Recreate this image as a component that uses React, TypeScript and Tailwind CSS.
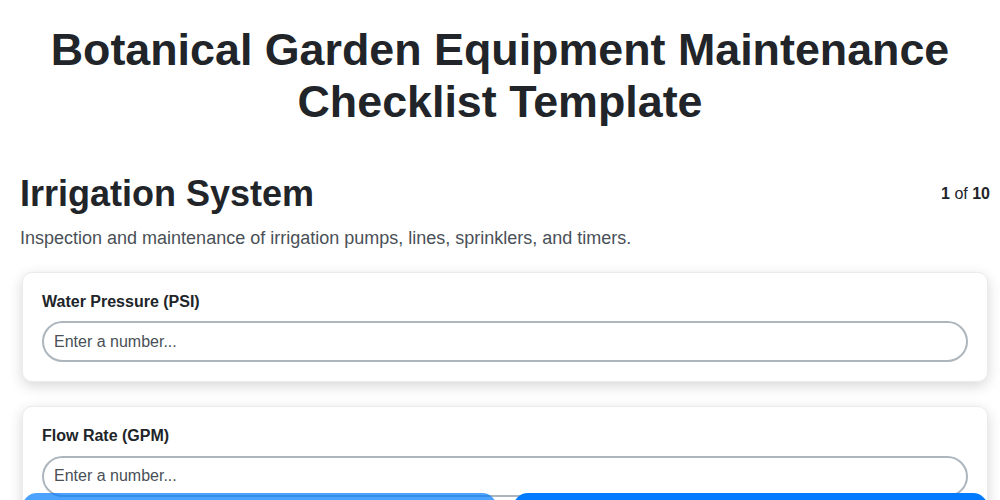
import React from "react";

function Field({ label }: { label: string }) {
  return (
    <div className="mx-[2px] rounded-[10px] border border-[#e9ecef] bg-white p-[19px] shadow-[0_4px_14px_rgba(0,0,0,0.16)]">
      <label className="mb-2.5 block text-base font-bold leading-[1.2] text-[#212529]">{label}</label>
      <input
        type="text"
        placeholder="Enter a number..."
        className="block h-[41px] w-full rounded-full border-2 border-[#adb5bd] bg-white px-2.5 text-base text-[#212529] outline-none placeholder:text-[#495057]"
      />
    </div>
  );
}

export default function App() {
  return (
    <div className="min-h-screen bg-white font-['Liberation_Sans',Arial,sans-serif] text-[#212529]">
      <h1 className="pt-[24px] text-center text-[2.8rem] font-bold leading-[1.15] text-[#212529]">
        Botanical Garden Equipment Maintenance
        <br />
        Checklist Template
      </h1>
      <div className="pl-5 pr-[10px] pt-[45px]">
        <div className="flex items-start justify-between">
          <h2 className="text-[36px] font-bold leading-[1.2] text-[#212529]">Irrigation System</h2>
          <div className="mt-2.5 text-base leading-6 text-[#212529]">
            <span className="font-bold">1</span> of <span className="font-bold">10</span>
          </div>
        </div>
        <p className="mt-2.5 text-lg leading-[1.5] text-[#495057]">
          Inspection and maintenance of irrigation pumps, lines, sprinklers, and timers.
        </p>
        <div className="mt-[20px] flex flex-col gap-6">
          <Field label="Water Pressure (PSI)" />
          <Field label="Flow Rate (GPM)" />
        </div>
        <div className="relative z-10 mx-[2px] -mt-[24px] flex gap-4 pb-5">
          <button className="h-12 flex-1 rounded-[15px] bg-[#007bff] text-base font-bold text-white opacity-70">
            Previous
          </button>
          <button className="h-12 flex-1 rounded-[15px] bg-[#007bff] text-base font-bold text-white">
            Next
          </button>
        </div>
      </div>
    </div>
  );
}
